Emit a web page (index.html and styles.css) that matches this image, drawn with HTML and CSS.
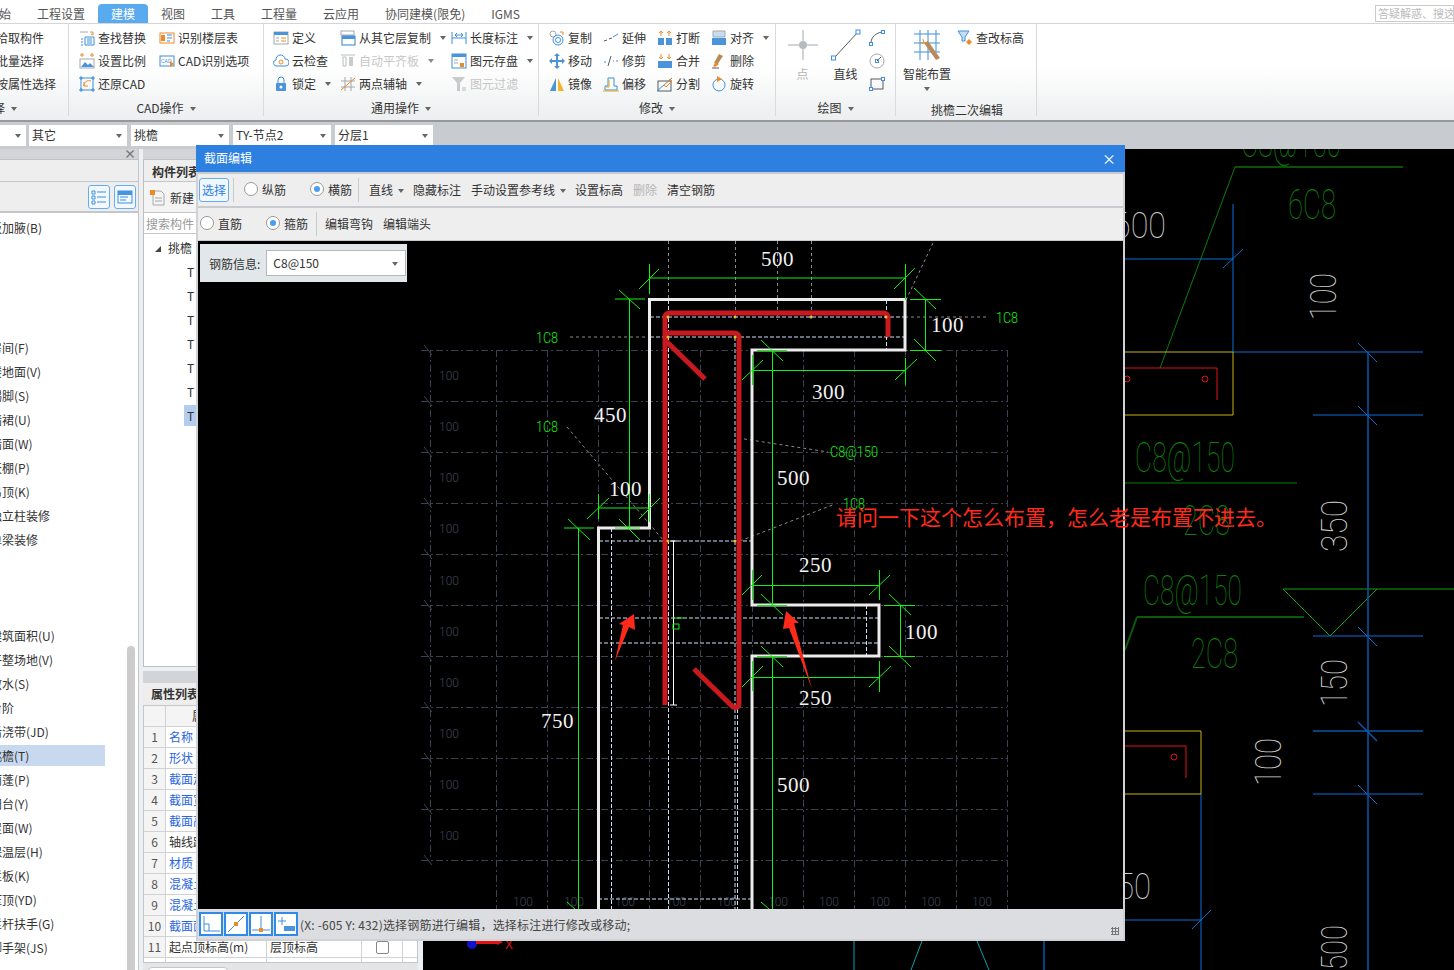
FILE: index.html
```html
<!DOCTYPE html>
<html lang="zh">
<head>
<meta charset="utf-8">
<title>截面编辑</title>
<link rel="stylesheet" href="styles.css">
</head>
<body>
<div class="app">
  <nav class="tabs">
    <span class="tab first">开始</span><span class="tab">工程设置</span><span class="tab on">建模</span><span class="tab">视图</span><span class="tab">工具</span><span class="tab">工程量</span><span class="tab">云应用</span><span class="tab">协同建模(限免)</span><span class="tab">IGMS</span>
    <span class="search">答疑解惑、搜这里</span>
  </nav>

  <section class="ribbon">
    <div class="grp g1">
      <div class="rows">
        <div class="it">拾取构件</div>
        <div class="it">批量选择</div>
        <div class="it">按属性选择</div>
      </div>
      <div class="glabel">选择<i class="dn"></i></div>
    </div>

    <div class="grp g2">
      <div class="rows">
        <div class="it"><svg class="ic" viewBox="0 0 16 16"><path class="s-g" d="M1 2h8"/><path class="s-o" d="M11 2h3v3M12 4l2 1"/><path class="s-b" d="M6 7h9v8H6zM8 9h5M8 11h5M8 13h5M2 15h2M2 12h2M2 9h2"/></svg><span>查找替换</span></div>
        <div class="it"><svg class="ic" viewBox="0 0 16 16"><rect class="s-o" x="1" y="3" width="14" height="10"/><rect class="f-o" x="2" y="5" width="4" height="6"/><path class="s-b" d="M8 5h5M8 8h5M8 11h3"/></svg><span>识别楼层表</span></div>
        <div class="it"><svg class="ic" viewBox="0 0 16 16"><path class="s-o" d="M1 2h4M3 0v4M11 2h4M13 0v4"/><rect class="s-g" x="1" y="6" width="14" height="9"/><path class="f-b" d="M2 14l4-5 3 3 2-2 4 4z"/></svg><span>设置比例</span></div>
        <div class="it"><svg class="ic" viewBox="0 0 16 16"><rect class="s-b" x="1" y="3" width="14" height="10"/><text class="ic-t" x="2" y="10">CAD</text><path class="f-o" d="M11 8l4 3-4 3z"/></svg><span>CAD识别选项</span></div>
        <div class="it"><svg class="ic" viewBox="0 0 16 16"><rect class="s-b" x="2" y="2" width="12" height="12"/><path class="s-b" d="M0 2h4M2 0v4M12 2h4M14 0v4M0 14h4M2 12v4M12 14h4M14 12v4"/><path class="s-o" d="M12 5a5 5 0 0 0-7 5M5 6v4h4"/></svg><span>还原CAD</span></div>
        <div></div>
      </div>
      <div class="glabel">CAD操作<i class="dn"></i></div>
    </div>

    <div class="grp g3">
      <div class="rows">
        <div class="it"><svg class="ic" viewBox="0 0 16 16"><rect class="s-g" x="1" y="2" width="14" height="12"/><rect class="f-b" x="1" y="2" width="14" height="3"/><path class="s-o" d="M8 8h5M8 11h5"/><path class="s-g" d="M3 8h3M3 11h3"/></svg><span>定义</span></div>
        <div class="it"><svg class="ic" viewBox="0 0 16 16"><rect class="s-g" x="1" y="1" width="13" height="4"/><rect class="s-b2" x="2" y="6" width="13" height="9"/><path class="f-b" d="M2 6h13v3H2z"/></svg><span>从其它层复制</span><i class="dn"></i></div>
        <div class="it"><svg class="ic" viewBox="0 0 16 16"><path class="s-b" d="M1 2v12M1 8h14M15 2v12"/><path class="s-b" d="M4 5h8M4 5l2-2M4 5l2 2M12 5l-2-2M12 5l-2 2"/></svg><span>长度标注</span><i class="dn"></i></div>
        <div class="it"><svg class="ic" viewBox="0 0 16 16"><path class="s-b" d="M4 13a3 3 0 0 1-1-6 4.500 4.500 0 0 1 9-1 3.500 3.500 0 0 1 1 7z"/><circle class="s-o" cx="8" cy="9" r="2"/></svg><span>云检查</span></div>
        <div class="it off"><svg class="ic" viewBox="0 0 16 16"><path class="s-g" d="M1 2h14M3 4h3v9H3z"/><rect class="f-g" x="9" y="4" width="4" height="9"/></svg><span>自动平齐板</span><i class="dn"></i></div>
        <div class="it"><svg class="ic" viewBox="0 0 16 16"><rect class="s-b" x="1" y="1" width="14" height="14"/><rect class="f-b" x="1" y="1" width="14" height="3"/><path class="s-g" d="M3 7h4M3 10h4"/><rect class="f-o" x="9" y="10" width="4" height="4"/></svg><span>图元存盘</span><i class="dn"></i></div>
        <div class="it"><svg class="ic" viewBox="0 0 16 16"><path class="f-b" d="M4 7h8a1 1 0 0 1 1 1v6a1 1 0 0 1-1 1H4a1 1 0 0 1-1-1V8a1 1 0 0 1 1-1z"/><path class="s-b" d="M5 7V4a3 3 0 0 1 6 0v3"/><circle class="f-w" cx="8" cy="11" r="1.500"/></svg><span>锁定</span><i class="dn"></i></div>
        <div class="it"><svg class="ic" viewBox="0 0 16 16"><path class="s-g" d="M5 1v14M11 1v14M1 5h14M1 11h14"/><path class="s-o" d="M1 14L15 2"/></svg><span>两点辅轴</span><i class="dn"></i></div>
        <div class="it off"><svg class="ic" viewBox="0 0 16 16"><path class="f-g" d="M1 1h13L9 7v8H6V7z"/><path class="s-g" d="M11 12h4M11 14h4"/></svg><span>图元过滤</span></div>
      </div>
      <div class="glabel">通用操作<i class="dn"></i></div>
    </div>

    <div class="grp g4">
      <div class="rows">
        <div class="it"><svg class="ic" viewBox="0 0 16 16"><circle class="s-g" cx="4" cy="4" r="3"/><circle class="s-b" cx="9" cy="10" r="5"/><circle class="s-b" cx="9" cy="10" r="2.500"/><path class="s-o" d="M11 2h3v3"/></svg><span>复制</span></div>
        <div class="it"><svg class="ic" viewBox="0 0 16 16"><path class="s-d" d="M1 11l3-1M6 9l3-1"/><path class="s-b" d="M10 7l5-3"/></svg><span>延伸</span></div>
        <div class="it"><svg class="ic" viewBox="0 0 16 16"><rect class="f-b" x="1" y="8" width="6" height="7"/><rect class="f-b" x="9" y="8" width="6" height="7"/><path class="s-o" d="M4 1v5M2 3l2-2 2 2M12 1v5M10 3l2-2 2 2"/></svg><span>打断</span></div>
        <div class="it"><svg class="ic" viewBox="0 0 16 16"><rect class="f-l" x="2" y="1" width="12" height="6"/><rect class="f-b" x="1" y="8" width="14" height="7"/><path class="s-g" d="M2 1h12v6H2z"/></svg><span>对齐</span><i class="dn"></i></div>
        <div class="it"><svg class="ic" viewBox="0 0 16 16"><path class="f-b" d="M8 0l3 3H9v4h4V5l3 3-3 3V9H9v4h2l-3 3-3-3h2V9H3v2L0 8l3-3v2h4V3H5z"/></svg><span>移动</span></div>
        <div class="it"><svg class="ic" viewBox="0 0 16 16"><path class="s-d" d="M8 3L5 13"/><path class="s-b" d="M1 9h2M10 8h1M13 8h2"/></svg><span>修剪</span></div>
        <div class="it"><svg class="ic" viewBox="0 0 16 16"><rect class="f-b" x="1" y="8" width="14" height="7"/><path class="s-o" d="M4 1v5M2 4l2 2 2-2M12 1v5M10 4l2 2 2-2"/></svg><span>合并</span></div>
        <div class="it"><svg class="ic" viewBox="0 0 16 16"><path class="f-br" d="M8 1l4 2-6 9-3-2z"/><path class="f-o" d="M5 9l3 2-4 3-2-1z"/><path class="s-d" d="M1 15h7"/></svg><span>删除</span></div>
        <div class="it"><svg class="ic" viewBox="0 0 16 16"><path class="f-b" d="M7 2v13H1z"/><path class="f-y" d="M9 2v13h6z"/></svg><span>镜像</span></div>
        <div class="it"><svg class="ic" viewBox="0 0 16 16"><path class="s-b" d="M2 14v-4h3V2h6v8h3v4z"/><path class="s-y" d="M0 15h16M6 4v7H3"/></svg><span>偏移</span></div>
        <div class="it"><svg class="ic" viewBox="0 0 16 16"><rect class="s-d" x="1" y="5" width="13" height="10"/><path class="s-b" d="M0 15L15 2"/><path class="s-o" d="M7 9l6-6 2 2-6 6z"/></svg><span>分割</span></div>
        <div class="it"><svg class="ic" viewBox="0 0 16 16"><circle class="s-b" cx="8" cy="9" r="6"/><path class="f-o" d="M6 0l5 3-5 3z"/></svg><span>旋转</span></div>
      </div>
      <div class="glabel">修改<i class="dn"></i></div>
    </div>

    <div class="grp g5">
      <div class="rows">
        <div class="big off"><svg class="bic" viewBox="0 0 30 32"><path class="s-g" d="M15 1v30M0 16h30"/><circle class="f-g" cx="15" cy="16" r="4"/></svg><span>点</span></div>
        <div class="big"><svg class="bic" viewBox="0 0 30 32"><path class="s-d" d="M3 29L27 3"/><rect class="s-b f-w" x="0.500" y="27" width="4" height="4"/><rect class="s-b f-w" x="25" y="1" width="4" height="4"/></svg><span>直线</span></div>
        <div class="minis">
          <svg class="ic" viewBox="0 0 16 16"><path class="s-d" d="M2 13C2 7 7 3 13 2"/><rect class="s-b" x="0.500" y="12.500" width="3" height="3"/><rect class="s-b" x="12.500" y="0.500" width="3" height="3"/></svg>
          <svg class="ic" viewBox="0 0 16 16"><circle class="s-g" cx="8" cy="8" r="7"/><path class="s-d" d="M8 8l4-4"/><rect class="s-b" x="6.500" y="6.500" width="3" height="3"/></svg>
          <svg class="ic" viewBox="0 0 16 16"><rect class="s-d" x="2" y="3" width="12" height="10"/><rect class="s-b f-w" x="0.500" y="11.500" width="3" height="3"/><rect class="s-b f-w" x="12.500" y="1.500" width="3" height="3"/></svg>
        </div>
      </div>
      <div class="glabel">绘图<i class="dn"></i></div>
    </div>

    <div class="grp g6">
      <div class="rows">
        <div class="big smart"><svg class="bic" viewBox="0 0 30 32"><path class="s-b" d="M2 5h26M2 14h26M2 23h26M8 1v30M16 1v30M24 1v22"/><path class="f-br" d="M12 14l4-2 12 17-4 2z"/><path class="s-o" d="M11 10l1 4 4-1M8 14h3"/></svg><span>智能布置</span><i class="dn small"></i></div>
        <div class="it"><svg class="ic" viewBox="0 0 16 16"><path class="f-l" d="M1 1h11L8 7v4H5V7z"/><path class="s-b" d="M1 1h11L8 7v4H5V7z"/><path class="f-o" d="M12 9l3 3-3 3-3-3z"/></svg><span>查改标高</span></div>
      </div>
      <div class="glabel low">挑檐二次编辑</div>
    </div>
  </section>

  <div class="selbar">
    <span class="sel s0"><i class="dn"></i></span>
    <span class="sel">其它<i class="dn"></i></span>
    <span class="sel">挑檐<i class="dn"></i></span>
    <span class="sel">TY-节点2<i class="dn"></i></span>
    <span class="sel">分层1<i class="dn"></i></span>
  </div>

  <main class="main">
    <aside class="left">
      <div class="strip"><span class="x">×</span></div>
      <div class="lhead"></div>
      <div class="ltools">
        <span class="tbtn"><svg class="ic" viewBox="0 0 16 16"><path class="s-b" d="M1 2h3v3H1zM1 7h3v3H1zM1 12h3v3H1zM6 3h9M6 8h9M6 13h9"/></svg></span>
        <span class="tbtn"><svg class="ic" viewBox="0 0 16 16"><rect class="s-b" x="1" y="2" width="14" height="12"/><rect class="f-b" x="1" y="2" width="14" height="4"/><path class="s-b" d="M3 8h8M3 11h6"/></svg></span>
      </div>
      <ul class="tree">
        <li><span>板加腋(B)</span></li><li></li><li></li><li></li><li></li>
        <li><span>房间(F)</span></li><li><span>楼地面(V)</span></li><li><span>踢脚(S)</span></li><li><span>墙裙(U)</span></li><li><span>墙面(W)</span></li><li><span>天棚(P)</span></li><li><span>吊顶(K)</span></li><li><span>独立柱装修</span></li><li><span>单梁装修</span></li>
        <li></li><li></li><li></li>
        <li><span>建筑面积(U)</span></li><li><span>平整场地(V)</span></li><li><span>散水(S)</span></li><li><span>台阶</span></li><li><span>后浇带(JD)</span></li><li class="cur"><span>挑檐(T)</span></li><li><span>雨蓬(P)</span></li><li><span>阳台(Y)</span></li><li><span>屋面(W)</span></li><li><span>保温层(H)</span></li><li><span>栏板(K)</span></li><li><span>压顶(YD)</span></li><li><span>栏杆扶手(G)</span></li><li><span>脚手架(JS)</span></li>
      </ul>
      <div class="scroll"></div>
    </aside>

    <section class="mid">
      <div class="strip"></div>
      <div class="comp">
        <div class="chead">构件列表</div>
        <div class="ctools"><svg class="ic" viewBox="0 0 16 16"><path class="s-g" d="M3 1h8l3 3v11H3zM5 8h7M5 11h7"/><rect class="f-o" x="0" y="0" width="5" height="5"/></svg><span>新建</span></div>
        <div class="csearch">搜索构件</div>
        <ul class="ctree">
          <li class="root"><i class="tri"></i>挑檐</li>
          <li>TY-1</li><li>TY-2</li><li>TY-3</li><li>TY-4</li><li>TY-5</li><li>TY-6</li><li class="cur"><span>TY-节点2</span></li>
        </ul>
      </div>
      <div class="gap"></div>
      <div class="props">
        <div class="chead">属性列表</div>
        <div class="ptable">
          <div class="pr head"><b></b><b class="c">属性名称</b><b class="c">属性值</b><b class="c">附加</b><b></b></div>
          <div class="pr"><b class="n">1</b><b class="lnk">名称</b><b></b><b></b><b></b></div>
          <div class="pr"><b class="n">2</b><b class="lnk">形状</b><b></b><b></b><b></b></div>
          <div class="pr"><b class="n">3</b><b class="lnk">截面走向</b><b></b><b></b><b></b></div>
          <div class="pr"><b class="n">4</b><b class="lnk">截面宽度</b><b></b><b></b><b></b></div>
          <div class="pr"><b class="n">5</b><b class="lnk">截面高度</b><b></b><b></b><b></b></div>
          <div class="pr"><b class="n">6</b><b>轴线距左边线</b><b></b><b></b><b></b></div>
          <div class="pr"><b class="n">7</b><b class="lnk">材质</b><b></b><b></b><b></b></div>
          <div class="pr"><b class="n">8</b><b class="lnk">混凝土类型</b><b></b><b></b><b></b></div>
          <div class="pr"><b class="n">9</b><b class="lnk">混凝土强度</b><b></b><b></b><b></b></div>
          <div class="pr"><b class="n">10</b><b class="lnk">截面面积</b><b></b><b></b><b></b></div>
          <div class="pr"><b class="n">11</b><b>起点顶标高(m)</b><b>层顶标高</b><b class="c"><i class="chk"></i></b><b></b></div>
          <div class="pr cut"><b></b><b></b><b></b><b></b><b></b></div>
        </div>
        <div class="pfoot"><span class="pbtn"></span></div>
      </div>
    </section>

    <div class="cad">
      <svg class="cadsvg" viewBox="423 149 1031 821">
        <path class="cl g1l" d="M1235 167H1403"/>
        <path class="cl g2l" d="M1235 167L1160 368"/>
        <path class="cl g2l" d="M1125 483H1297"/>
        <path class="cl g3l" d="M1137 617H1304M1137 617L1125 650"/>
        <path class="cl g1l" d="M1283 589H1377L1330 636zM1377 589H1454"/>
        <path class="cl bl" d="M1125 259H1233M1233 204V352M1223 268L1243 249M1233 352H1423M1358 343L1377 362M1313 415H1423M1358 406L1377 425M1313 636H1423M1358 627L1377 646M1313 794H1423M1358 785L1377 804M1201 794V970M1125 920H1201M1192 929L1211 910"/>
        <path class="cl bl2" d="M1368 352V970M1313 731H1423M1358 722L1377 741"/>
        <path class="cl yl" d="M1125 352H1233V415H1125M1125 731H1201V794H1125"/>
        <path class="cl rl" d="M1125 368H1217V400M1125 746H1186V778"/>
        <circle class="cl rl" cx="1205" cy="379" r="3"/><circle class="cl rl" cx="1127" cy="379" r="3"/><circle class="cl rl" cx="1174" cy="757" r="3"/>
        <path class="cl te" d="M854 941V970M922 941L911 970M977 941L989 970"/>
        <path class="cl bl2" d="M1044 941V970"/>
        <circle class="dot" cx="472" cy="944" r="5"/>
        <path class="arr" d="M476 941H497V939L503 942L497 945V944H476z"/>
        <text class="xl" x="505" y="949">X</text>
        <text class="cg" x="1241" y="157" textLength="100" lengthAdjust="spacingAndGlyphs">C8@150</text>
        <text class="cg" x="1288" y="219" textLength="48" lengthAdjust="spacingAndGlyphs">6C8</text>
        <text class="cg" x="1135" y="472" textLength="100" lengthAdjust="spacingAndGlyphs">C8@150</text>
        <text class="cg" x="1183" y="535" textLength="47" lengthAdjust="spacingAndGlyphs">2C8</text>
        <text class="cg" x="1143" y="605" textLength="99" lengthAdjust="spacingAndGlyphs">C8@150</text>
        <text class="cg" x="1191" y="668" textLength="47" lengthAdjust="spacingAndGlyphs">2C8</text>
        <text class="cw" x="1113" y="238" textLength="53" lengthAdjust="spacingAndGlyphs">600</text>
        <text class="cw" x="1100" y="899" textLength="51" lengthAdjust="spacingAndGlyphs">150</text>
        <text class="cw" transform="translate(1336 320) rotate(-90)" textLength="47" lengthAdjust="spacingAndGlyphs">100</text>
        <text class="cw" transform="translate(1347 552) rotate(-90)" textLength="52" lengthAdjust="spacingAndGlyphs">350</text>
        <text class="cw" transform="translate(1347 707) rotate(-90)" textLength="48" lengthAdjust="spacingAndGlyphs">150</text>
        <text class="cw" transform="translate(1281 786) rotate(-90)" textLength="48" lengthAdjust="spacingAndGlyphs">100</text>
        <text class="cw" transform="translate(1347 970) rotate(-90)" textLength="45" lengthAdjust="spacingAndGlyphs">500</text>
      </svg>
    </div>
  </main>

  <div class="dlg">
    <header class="dt"><span>截面编辑</span><span class="dx">×</span></header>
    <div class="bar b1">
      <span class="selbtn">选择</span><i class="sep s1"></i>
      <label class="rad r1"><i class="ro"></i>纵筋</label>
      <label class="rad r2"><i class="ro on"></i>横筋</label><i class="sep s2"></i>
      <span class="ac a1">直线<i class="dn"></i></span>
      <span class="ac a2">隐藏标注</span>
      <span class="ac a3">手动设置参考线<i class="dn"></i></span>
      <span class="ac a4">设置标高</span>
      <span class="ac a5 dis">删除</span>
      <span class="ac a5">清空钢筋</span>
    </div>
    <div class="bar b2">
      <label class="rad r3"><i class="ro"></i>直筋</label>
      <label class="rad r4"><i class="ro on"></i>箍筋</label><i class="sep s3"></i>
      <span class="ac a6">编辑弯钩</span>
      <span class="ac a5">编辑端头</span>
    </div>
    <div class="dcanvas">
      <svg class="dsvg" viewBox="198 241 925 668">
        <path class="grid" d="M421 350.500H1007M421 401.500H1007M421 452.500H1007M421 503.500H1007M421 554.500H1007M421 605.500H1007M421 656.500H1007M421 707.500H1007M421 758.500H1007M421 809.500H1007M421 860.500H1007M430.500 350V860M496.500 350V909M547.500 350V909M598.500 350V909M649.500 350V909M700.500 350V909M752.500 350V909M803.500 350V909M854.500 350V909M905.500 350V909M956.500 350V909M1007.500 350V909"/>
        <path class="grids" d="M424 345L432 355M424 396L432 406M424 447L432 457M424 498L432 508M424 549L432 559M424 600L432 610M424 651L432 661M424 702L432 712M424 753L432 763M424 804L432 814M424 855L432 865"/>
        <g class="gl">
          <text x="439" y="380">100</text><text x="439" y="431">100</text><text x="439" y="482">100</text><text x="439" y="533">100</text><text x="439" y="585">100</text><text x="439" y="636">100</text><text x="439" y="687">100</text><text x="439" y="738">100</text><text x="439" y="789">100</text><text x="439" y="840">100</text>
          <text x="513" y="906">100</text><text x="564" y="906">100</text><text x="615" y="906">100</text><text x="666" y="906">100</text><text x="717" y="906">100</text><text x="768" y="906">100</text><text x="819" y="906">100</text><text x="870" y="906">100</text><text x="921" y="906">100</text><text x="972" y="906">100</text>
        </g>
        <path class="lead" d="M668.500 241V317M735.500 241V317M777.500 241V320M811.500 241V317M906 300L933 243M905 317H989M570 337H650M567 427L664 541M738 438L828 452M740 541L835 504"/>
        <path class="wd" d="M650 317H905M650 337H905M668.500 300V909M735 337V909M737.500 337V909M886.500 300V350M866.500 605V656M611.500 528V909M599 541H752M599 618H879M598 643H879M598 899H751"/>
        <path class="sec" d="M598.500 909V528H649.500V299.500H905V350H752V605H879V656H752V909"/>
        <path class="wh" d="M673.500 541V705M670 541H677M670 705H677"/>
        <path class="reb" d="M665 705V318Q665 313 670 313H883Q888 313 888 318V337M665 333H734Q739 333 739 338V703Q739 709 733 707L694 669M665 340L705 379"/>
        <path class="dim" d="M649.500 278H906M649.500 264V294M639 289L659 269M905.500 264V300M894 289L915 268M629.500 299V528M615 299H645M619 290L640 309M615 528H640M619 519L640 540M598.500 494V519M598.500 508H649M649.500 494V522M587 519L609 498M639 519L660 498M578.500 528V909M564 528H594M568 519L590 540M925.500 299V350M910 299.500H941M910 350.500H941M914 288L936 309M914 339L936 361M752 370.500H905M752.500 355V385M905.500 358V385M742 380L763 360M895 380L917 359M772.500 350V605M757 350.500H787M761 340L783 361M757 605.500H787M761 594L783 615M757 656.500H787M761 646L783 667M772.500 656V909M752 585.500H879M752.500 570V600M879.500 570V600M742 595L762 575M869 595L890 575M900.500 605V656M884 605.500H915M884 656.500H915M889 594L911 615M889 646L911 667M752 677.500H879M752.500 661V691M879.500 661V692M742 687L763 666M869 687L891 666M567 902L575 909M761 902L769 909M673 618H683M673 624H679V629H673z"/>
        <g class="pts"><circle cx="668" cy="317" r="1.500"/><circle cx="735" cy="317" r="1.500"/><circle cx="811" cy="317" r="1.500"/><circle cx="886" cy="317" r="1.500"/><circle cx="668" cy="337" r="1.500"/><circle cx="735" cy="337" r="1.500"/><circle cx="668" cy="541" r="1.500"/><circle cx="735" cy="541" r="1.500"/></g>
        <g class="tg">
          <text x="536" y="343" textLength="22" lengthAdjust="spacingAndGlyphs">1C8</text>
          <text x="996" y="323" textLength="22" lengthAdjust="spacingAndGlyphs">1C8</text>
          <text x="536" y="432" textLength="22" lengthAdjust="spacingAndGlyphs">1C8</text>
          <text x="830" y="457" textLength="48" lengthAdjust="spacingAndGlyphs">C8@150</text>
          <text x="843" y="509" textLength="22" lengthAdjust="spacingAndGlyphs">1C8</text>
        </g>
        <g class="tw">
          <text x="761" y="266">500</text><text x="594" y="422">450</text><text x="609" y="496">100</text><text x="931" y="332">100</text><text x="812" y="399">300</text><text x="777" y="485">500</text><text x="799" y="572">250</text><text x="905" y="639">100</text><text x="799" y="705">250</text><text x="541" y="728">750</text><text x="777" y="792">500</text>
        </g>
        <path class="rarr" d="M634 614L635 630L629 627L615 661L623 625L619 624zM786 611L799 623L794 623L812 689L789 628L783 629z"/>
      </svg>
      <div class="info"><span>钢筋信息:</span><span class="isel">C8@150<i class="dn"></i></span></div>
    </div>
    <footer class="dstat">
      <span class="sb"><svg class="sic" viewBox="0 0 20 20"><path class="s-b" d="M3 2v15h16M3 10h5v7"/></svg></span>
      <span class="sb"><svg class="sic" viewBox="0 0 20 20"><path class="s-b" d="M2 18L18 2"/><rect class="f-o" x="8" y="8" width="4" height="4"/></svg></span>
      <span class="sb"><svg class="sic" viewBox="0 0 20 20"><path class="s-b" d="M10 2v15M1 16h18"/><rect class="f-o" x="8" y="14" width="4" height="4"/></svg></span>
      <span class="sb"><svg class="sic" viewBox="0 0 20 20"><path class="s-b" d="M2 7h8M6 3v8"/><rect class="f-b" x="8" y="12" width="11" height="5"/></svg></span>
      <span class="stxt">(X: -605 Y: 432)选择钢筋进行编辑，选择标注进行修改或移动;</span>
      <span class="grip"></span>
    </footer>
  </div>

  <div class="note">请问一下这个怎么布置，怎么老是布置不进去。</div>
</div>
</body>
</html>
```

FILE: styles.css
```css
* { box-sizing: border-box; }
html, body { margin: 0; padding: 0; }
body { font-family: "Noto Sans CJK SC", "Liberation Sans", sans-serif; font-size: 12px; color: #333; background: #c8cbcf; overflow: hidden; }
ul { list-style: none; margin: 0; padding: 0; }
i, b { font-style: normal; font-weight: 400; }
.app { position: relative; width: 1454px; height: 970px; overflow: hidden; display: flex; flex-direction: column; }

/* tabs */
.tabs { height: 24px; flex: none; display: flex; align-items: flex-end; background: #fff; border-bottom: 1px solid #d4d6d8; }
.tab { height: 19px; line-height: 19px; padding: 0 13px; color: #555; white-space: nowrap; font-size: 12px; }
.tab.first { margin-left: -26px; }
.tab.on { background: #5aaaf0; color: #fff; border-radius: 4px 4px 0 0; }
.search { margin-left: auto; align-self: flex-start; margin-top: 5px; width: 79px; height: 17px; line-height: 15px; border: 1px solid #ccc; color: #bbb; font-size: 11px; padding-left: 2px; overflow: hidden; white-space: nowrap; }

/* ribbon */
.ribbon { height: 98px; flex: none; display: flex; background: linear-gradient(#fff 45%, #eceeef); border-bottom: 2px solid #96989a; }
.grp { flex: none; display: flex; flex-direction: column; border-right: 1px solid #d8dadc; margin-bottom: 4px; padding-top: 2px; }
.rows { height: 69px; display: grid; grid-auto-flow: row; grid-auto-rows: 23px; align-items: center; }
.it { display: flex; align-items: center; gap: 3px; height: 23px; white-space: nowrap; color: #333; }
.it.off { color: #b4b4b4; opacity: .75; }
.ic { width: 16px; height: 16px; flex: none; display: block; }
.glabel { height: 21px; line-height: 21px; text-align: center; margin-top: 2px; white-space: nowrap; }
.glabel.low { line-height: 26px; }
.dn { display: inline-block; width: 0; height: 0; border: 3px solid transparent; border-top: 4px solid #666; border-bottom: 0; margin-left: 6px; vertical-align: 2px; }
.dn.small { margin: 0; }
.g1 { width: 69px; }
.g1 .rows { margin-left: -4px; }
.g1 .glabel { text-align: left; margin-left: -19px; }
.g2 { width: 195px; padding-left: 10px; }
.g2 .rows { grid-template-columns: 80px 100px; }
.g2 .glabel { margin-left: -10px; }
.g3 { width: 275px; padding-left: 9px; }
.g3 .rows { grid-template-columns: 67px 111px 80px; }
.g3 .glabel { margin-left: -9px; }
.g4 { width: 237px; padding-left: 10px; }
.g4 .rows { grid-template-columns: 54px 54px 54px 60px; }
.g4 .glabel { margin-left: -10px; }
.g5 { width: 120px; padding-left: 5px; }
.g5 .rows { grid-template-columns: 43px 43px 20px; grid-auto-rows: 69px; }
.g5 .glabel { margin-left: -5px; }
.g6 { width: 141px; padding-left: 7px; }
.g6 .rows { grid-template-columns: 54px 80px; grid-auto-rows: 69px; align-items: start; }
.g6 .glabel { margin-left: -5px; }
.big { height: 69px; display: flex; flex-direction: column; align-items: center; white-space: nowrap; line-height: 18px; }
.big.off { color: #b4b4b4; }
.bic { width: 30px; height: 32px; flex: none; margin: 3px 0 4px; }
.smart { width: 48px; }
.smart .dn { margin-top: 4px; }
.minis { height: 69px; display: flex; flex-direction: column; justify-content: space-around; padding-left: 2px; }

/* icon paints */
.s-g, .s-o, .s-b, .s-b2, .s-d, .s-y { fill: none; stroke-width: 1; }
.s-g { stroke: #a4a8ac; }
.s-o { stroke: #ee8a26; }
.s-b { stroke: #3f8fdc; }
.s-b2 { stroke: #2f7fd0; }
.s-d { stroke: #555b63; }
.s-y { stroke: #e9a91c; }
.f-o { fill: #ee8a26; }
.f-b { fill: #4a94dc; }
.f-l { fill: #c6dcf2; }
.f-g { fill: #b8bbbe; }
.f-w { fill: #fff; }
.f-y { fill: #f3b428; }
.f-br { fill: #b88a5a; }
.ic-t { font-size: 5px; fill: #3f8fdc; font-family: "Liberation Sans", sans-serif; }

/* selector bar */
.selbar { height: 27px; flex: none; display: flex; align-items: flex-start; padding-top: 3px; gap: 4px; background: #c8cbcf; }
.sel { width: 98px; height: 21px; line-height: 19px; background: #fff; padding-left: 3px; position: relative; white-space: nowrap; }
.sel .dn { position: absolute; right: 5px; top: 9px; margin: 0; }
.sel.s0 { width: 26px; margin-right: -1px; }

/* main */
.main { flex: 1; min-height: 0; display: flex; }
.left { width: 139px; flex: none; display: flex; flex-direction: column; position: relative; background: #fff; border-right: 1px solid #c4c6ca; overflow: hidden; }
.strip { height: 11px; flex: none; background: #d2d4d8; border-bottom: 1px solid #bfc1c5; position: relative; }
.x { position: absolute; right: 2px; top: -2px; font-size: 12px; line-height: 14px; color: #777; font-weight: 700; }
.lhead { height: 22px; flex: none; background: #eee; border-bottom: 1px solid #c4c6ca; }
.ltools { height: 31px; flex: none; display: flex; justify-content: flex-end; align-items: center; gap: 4px; padding-right: 2px; background: #eee; border-bottom: 2px solid #c4c6ca; }
.tbtn { width: 22px; height: 24px; border: 1px solid #64aef0; border-radius: 3px; display: flex; align-items: center; justify-content: center; background: #f2f8fe; }
.tree { padding-top: 2px; }
.tree li { height: 24px; display: flex; align-items: center; }
.tree span { display: block; margin-left: -10px; padding-left: 10px; width: 115px; height: 21px; line-height: 21px; white-space: nowrap; text-indent: -10px; }
.tree .cur span { background: #c7d8ef; }
.scroll { position: absolute; left: 127px; top: 497px; bottom: 0; width: 8px; background: #ccc; border-radius: 4px 4px 0 0; }

.mid { width: 284px; flex: none; padding: 0 5px 0 4px; display: flex; flex-direction: column; background: #eeeff0; }
.comp { height: 507px; flex: none; background: #fff; border: 1px solid #bcbec2; border-top: 0; display: flex; flex-direction: column; }
.chead { height: 22px; line-height: 23px; padding-left: 8px; background: #eee; font-weight: 700; border-bottom: 1px solid #c4c6ca; flex: none; }
.props .chead { height: 23px; line-height: 22px; }
.ctools { height: 31px; flex: none; display: flex; align-items: center; gap: 4px; padding: 1px 0 0 6px; background: #f4f4f4; border-bottom: 1px solid #c4c6ca; line-height: 18px; }
.csearch { height: 21px; line-height: 21px; flex: none; padding-left: 2px; color: #999; border-bottom: 1px solid #c4c6ca; }
.ctree { padding-top: 2px; }
.ctree li { height: 24px; line-height: 24px; padding-left: 43px; white-space: nowrap; letter-spacing: 2px; }
.ctree .root { padding-left: 23px; letter-spacing: 0; }
.tri { display: inline-block; width: 0; height: 0; border-left: 6px solid transparent; border-bottom: 6px solid #444; margin: 0 7px 0 -12px; vertical-align: 1px; }
.ctree .cur span { display: inline-block; margin-left: -3px; padding: 0 3px; height: 21px; line-height: 21px; background: #b4cdec; vertical-align: top; margin-top: 1px; }
.gap { height: 4px; flex: none; }
.props { flex: 1; min-height: 0; display: flex; flex-direction: column; }
.props::before { content: ""; height: 12px; background: #d2d4d8; flex: none; }
.ptable { border-left: 1px solid #c4c6ca; border-right: 1px solid #c4c6ca; background: #fff; }
.pr { display: grid; grid-template-columns: 22px 101px 95px 41px 15px; height: 21px; border-bottom: 1px solid #d0d2d5; }
.pr b { line-height: 20px; padding-left: 3px; border-right: 1px solid #d0d2d5; white-space: nowrap; overflow: hidden; }
.pr b:last-child { border-right: 0; }
.pr .n { padding: 0; text-align: center; color: #555; background: #f4f4f4; font-size: 12px; }
.pr .c { text-align: center; padding: 0; }
.pr .lnk { color: #2a66e0; }
.pr.head { background: #f4f4f4; }
.pr.cut { height: 4px; border-bottom: 0; }
.chk { display: inline-block; width: 13px; height: 13px; border: 1px solid #888; border-radius: 2px; vertical-align: -2px; background: #fff; }
.pfoot { flex: 1; background: #e4e5e7; border-top: 1px solid #c4c6ca; padding: 4px 0 0 5px; }
.pbtn { display: block; width: 80px; height: 12px; background: #fff; border: 1px solid #c4c6ca; border-radius: 4px 4px 0 0; }

.cad { flex: 1; min-width: 0; background: #000; }
.cadsvg { display: block; width: 1031px; height: 821px; }
.cl { fill: none; stroke-width: 1; }
.g1l { stroke: #12a012; }
.g2l { stroke: #0b7d0b; }
.g3l { stroke: #0a5a0a; stroke-width: 2; }
.bl { stroke: #0a6fd8; }
.bl2 { stroke: #0a56a8; stroke-width: 1.500; }
.yl { stroke: #c4b414; }
.rl { stroke: #e01414; }
.te { stroke: #0aa0a8; }
.dot { fill: #1212c8; }
.arr { fill: #e01414; }
.xl { fill: #e01414; font: 12px "Liberation Sans", sans-serif; }
.cg { fill: #0c7c0c; font: 100 42px Roboto, "Liberation Sans", sans-serif; }
.cw { fill: #d0d0d0; font: 100 36px Roboto, "Liberation Sans", sans-serif; }

/* dialog */
.dlg { position: absolute; left: 196px; top: 145px; width: 929px; height: 796px; display: flex; flex-direction: column; background: #c8cbcf; border: solid #d0d2d6; border-width: 0 2px 2px; letter-spacing: 0; }
.dt { height: 27px; flex: none; margin: 0 -2px; padding: 0 9px 2px 8px; background: #2d7fe0; color: #fff; display: flex; justify-content: space-between; align-items: center; }
.dx { font-size: 14px; line-height: 16px; }
.bar { height: 32px; flex: none; display: flex; align-items: center; background: #eeeeee; margin-top: 2px; padding-bottom: 2px; position: relative; }
.b2 { margin-bottom: 1px; }
.selbtn { width: 30px; height: 24px; line-height: 22px; margin: 2px 0 0 1px; text-align: center; color: #2a80e8; background: #f0f7ff; border: 1px solid #64aef0; border-radius: 3px; }
.sep { width: 1px; height: 24px; background: #c8cacc; flex: none; margin-top: 2px; }
.s1 { margin-left: 4px; }
.s2 { margin-left: 6px; }
.s3 { margin-left: 8px; }
.rad { display: flex; align-items: center; gap: 4px; white-space: nowrap; }
.r1 { margin-left: 10px; }
.r2 { margin-left: 24px; }
.r3 { margin-left: 2px; }
.r4 { margin-left: 24px; }
.ro { width: 14px; height: 14px; flex: none; border-radius: 50%; border: 1px solid #999; background: #fff; position: relative; }
.ro.on::after { content: ""; position: absolute; left: 3px; top: 3px; width: 6px; height: 6px; border-radius: 50%; background: #4a9ef0; }
.ac { white-space: nowrap; }
.ac .dn { margin-left: 5px; }
.a1 { margin-left: 10px; }
.a2 { margin-left: 9px; }
.a3 { margin-left: 10px; }
.a4 { margin-left: 9px; }
.a5 { margin-left: 10px; }
.a6 { margin-left: 8px; }
.dis { color: #b4b4b4; }
.dcanvas { flex: 1; min-height: 0; background: #000; position: relative; overflow: hidden; }
.dsvg { display: block; width: 925px; height: 668px; }
.info { position: absolute; left: 2px; top: 3px; width: 207px; height: 38px; background: #e2e8ea; display: flex; align-items: center; padding-left: 9px; gap: 6px; }
.isel { width: 140px; height: 26px; line-height: 23px; border: 1px solid #b4b6b8; background: #fff; padding-left: 6px; position: relative; }
.isel .dn { position: absolute; right: 7px; top: 11px; margin: 0; }
.grid { fill: none; stroke: #3a4252; stroke-width: 1; stroke-dasharray: 7 3 2 3; }
.grids { fill: none; stroke: #3a4252; }
.gl text { fill: #3f4656; font: 300 12px Roboto, "Liberation Sans", sans-serif; }
.lead { fill: none; stroke: #8a8a8a; stroke-width: 1; stroke-dasharray: 3 3; }
.wd { fill: none; stroke: #cfe0f8; stroke-width: 1; stroke-dasharray: 4 2; }
.sec { fill: none; stroke: #ececec; stroke-width: 3; }
.wh { fill: none; stroke: #fff; }
.reb { fill: none; stroke: #c8191e; stroke-width: 5; }
.dim { fill: none; stroke: #12f012; stroke-width: 1; }
.pts { fill: #e8c020; }
.tg text { fill: #12f012; font: 300 15px Roboto, "Liberation Sans", sans-serif; }
.tw text { fill: #f2f2f2; font: 21px "Liberation Serif", serif; letter-spacing: .5px; }
.rarr { fill: #ff2a1a; }
.dstat { height: 30px; flex: none; background: #dcdde0; display: flex; align-items: center; gap: 1px; padding-left: 1px; position: relative; }
.sb { width: 24px; height: 24px; border: 2px solid #2f8ae8; background: #fff; display: flex; align-items: center; justify-content: center; flex: none; }
.sic { width: 20px; height: 20px; display: block; }
.stxt { margin-left: 1px; color: #444; white-space: nowrap; letter-spacing: .19px; }
.grip { position: absolute; right: 4px; bottom: 4px; width: 8px; height: 8px; background: radial-gradient(circle, #777 1px, transparent 1.300px) 0 0 / 3px 3px; }
.note { position: absolute; left: 836px; top: 500px; font-size: 21px; line-height: 32px; color: #ff2a1a; white-space: nowrap; }
```
